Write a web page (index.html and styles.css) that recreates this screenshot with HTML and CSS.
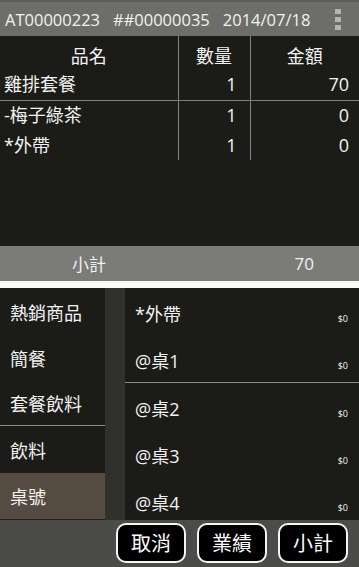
FILE: index.html
```html
<!DOCTYPE html>
<html lang="zh-Hant">
<head>
  <meta charset="UTF-8" />
  <meta name="viewport" content="width=device-width, initial-scale=1" />
  <title>點餐</title>
  <link rel="stylesheet" href="styles.css">
</head>
<body>

<div class="app">
  <header class="topbar">
    <span class="ticket"><span>AT00000223</span><span>##00000035</span><span>2014/07/18</span></span>
    <span class="overflow" aria-label="更多選項"><i></i><i></i><i></i></span>
  </header>

  <section class="order">
    <table class="order-table">
      <thead>
        <tr>
          <th class="col-name">品名</th>
          <th class="col-qty">數量</th>
          <th class="col-amt">金額</th>
        </tr>
      </thead>
      <tbody>
        <tr class="main-line">
          <td class="col-name">雞排套餐</td>
          <td class="col-qty">1</td>
          <td class="col-amt">70</td>
        </tr>
        <tr>
          <td class="col-name">-梅子綠茶</td>
          <td class="col-qty">1</td>
          <td class="col-amt">0</td>
        </tr>
        <tr>
          <td class="col-name">*外帶</td>
          <td class="col-qty">1</td>
          <td class="col-amt">0</td>
        </tr>
      </tbody>
    </table>
  </section>

  <div class="subtotal">
    <span class="subtotal-label">小計</span>
    <span class="subtotal-value">70</span>
  </div>
  <div class="strip"></div>

  <div class="picker">
    <ul class="cats">
      <li class="cat cat-a">熱銷商品</li>
      <li class="cat cat-b">簡餐</li>
      <li class="cat cat-b">套餐飲料</li>
      <li class="cat cat-c">飲料</li>
      <li class="cat cat-a active">桌號</li>
    </ul>
    <div class="gutter"></div>
    <ul class="items">
      <li class="item"><span class="item-name">*外帶</span><span class="item-price">$0</span></li>
      <li class="item split"><span class="item-name">@桌1</span><span class="item-price">$0</span></li>
      <li class="item"><span class="item-name">@桌2</span><span class="item-price">$0</span></li>
      <li class="item"><span class="item-name">@桌3</span><span class="item-price">$0</span></li>
      <li class="item"><span class="item-name">@桌4</span><span class="item-price">$0</span></li>
    </ul>
  </div>

  <footer class="actions">
    <button class="btn">取消</button>
    <button class="btn">業績</button>
    <button class="btn">小計</button>
  </footer>
</div>

</body>
</html>
```

FILE: styles.css
```css
/* Reset */
* {
  margin: 0;
  padding: 0;
  box-sizing: border-box;
}
html, body {
  width: 359px;
  height: 567px;
  overflow: hidden;
  background: #1b1c18;
  color: #f2f2f0;
  font-family: 'Open Sans', 'Noto Sans CJK TC', sans-serif;
}
.app {
  height: 567px;
  display: flex;
  flex-direction: column;
}
/* Top bar */
.topbar {
  height: 36px;
  flex: none;
  background: #6d6e6a;
  border-top: 2px solid #5c5d59;
  display: flex;
  align-items: center;
  justify-content: space-between;
  padding: 0 18px 0 5px;
}
.ticket {
  display: flex;
  gap: 13px;
  font-size: 16.5px;
  white-space: nowrap;
}
.overflow {
  display: flex;
  flex-direction: column;
  gap: 3px;
}
.overflow i {
  display: block;
  width: 6px;
  height: 5px;
  background: #b4b5b1;
}
/* Order table */
.order {
  flex: 1;
  background: #1b1c18;
}
.order-table {
  width: 100%;
  border-collapse: collapse;
  table-layout: fixed;
  font-size: 18px;
}
.order-table th,
.order-table td {
  font-weight: normal;
  white-space: nowrap;
  line-height: 20px;
}
.order-table th {
  height: 38px;
  padding-top: 2px;
  text-align: center;
}
.order-table td {
  height: 30px;
}
.order-table .main-line td {
  height: 26px;
  vertical-align: top;
  border-bottom: 1px solid #7f807c;
}
.col-name {
  width: 178px;
  padding-left: 4px;
}
th.col-name {
  padding-left: 0;
}
.col-qty {
  width: 72px;
  border-left: 1px solid #7f807c;
  text-align: right;
  padding-right: 13px;
}
.col-amt {
  border-left: 1px solid #7f807c;
  text-align: right;
  padding-right: 10px;
}
th.col-qty,
th.col-amt {
  padding-right: 0;
}
/* Subtotal */
.subtotal {
  height: 35px;
  flex: none;
  background: #7b7c78;
  display: grid;
  grid-template-columns: 178px 1fr;
  align-items: center;
  font-size: 17px;
}
.subtotal-label {
  text-align: center;
}
.subtotal-value {
  text-align: right;
  padding-right: 45px;
}
.strip {
  height: 7px;
  flex: none;
  background: #f8faf5;
}
/* Category + item picker */
.picker {
  height: 232px;
  flex: none;
  display: flex;
}
.cats,
.items {
  list-style: none;
}
.cats {
  width: 105px;
  flex: none;
  background: #1b1c18;
}
.cat {
  display: flex;
  align-items: center;
  padding-left: 10px;
  font-size: 18px;
  height: 45px;
}
.cat-a {
  height: 47px;
}
.cat-c {
  height: 48px;
  border-top: 1px solid #8a8b87;
}
.cat.active {
  background: #564b40;
  border-bottom: 1px solid #2a1f25;
}
.gutter {
  width: 20px;
  flex: none;
  background: #30312d;
}
.items {
  flex: 1;
  overflow: hidden;
  background: #1b1c18;
}
.item {
  height: 47px;
  display: flex;
  align-items: center;
  justify-content: space-between;
  padding: 3px 11px 0 10px;
}
.item.split {
  border-bottom: 1px solid #8a8b87;
  height: 48px;
}
.item-name {
  font-size: 18px;
}
.item-price {
  font-size: 9px;
  margin-top: 11px;
}
/* Bottom actions */
.actions {
  height: 47px;
  flex: none;
  background: #4b4c48;
  display: flex;
  justify-content: flex-end;
  align-items: center;
  gap: 11px;
  padding: 0 11px 2px 0;
}
.btn {
  width: 70px;
  height: 40px;
  background: #000;
  color: #fff;
  border: 2px solid #f4f4f4;
  border-radius: 10px;
  font-family: 'Noto Sans CJK TC', sans-serif;
  font-size: 20px;
}
```
